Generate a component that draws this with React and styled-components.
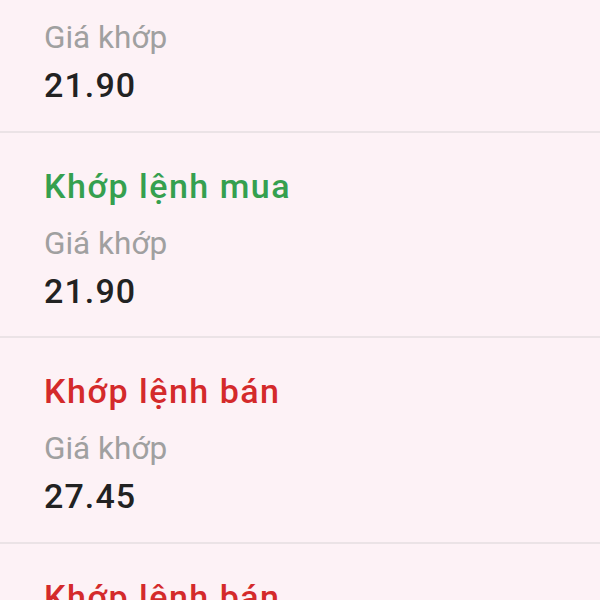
import React from "react";
import styled, { createGlobalStyle } from "styled-components";

const GlobalStyle = createGlobalStyle`
  html, body {
    margin: 0;
    padding: 0;
    background: #fdf2f6;
  }
  body {
    font-family: Roboto, "Noto Sans", "Liberation Sans", sans-serif;
    -webkit-font-smoothing: antialiased;
  }
`;

const Screen = styled.div`
  width: 600px;
  height: 600px;
  overflow: hidden;
  background: #fdf2f6;
`;

// the list is scrolled, the first order's title is above the viewport
const List = styled.ul`
  list-style: none;
  margin: -73px 0 0;
  padding: 0;
`;

const Item = styled.li`
  padding: 29px 44px 21.5px;
  border-bottom: 2px solid #ebe3e6;
`;

const Title = styled.div`
  font-size: 34px;
  line-height: 48px;
  font-weight: 500;
  letter-spacing: 1.5px;
  color: ${(props) => (props.side === "buy" ? "#35a04f" : "#d42a2b")};
`;

const Label = styled.div`
  margin-top: 10px;
  font-size: 31.5px;
  line-height: 48px;
  color: #a0a0a0;
`;

const Value = styled.div`
  margin-top: -1px;
  font-size: 34px;
  line-height: 48px;
  font-weight: 500;
  letter-spacing: 1.1px;
  color: #222222;
`;

const orders = [
  { side: "buy", price: "21.90" },
  { side: "buy", price: "21.90" },
  { side: "sell", price: "27.45" },
  { side: "sell", price: "27.45" },
];

const App = () => {
  return (
    <>
      <GlobalStyle />
      <Screen>
        <List>
          {orders.map((o, i) => (
            <Item key={i}>
              <Title side={o.side}>
                {o.side === "buy" ? "Khớp lệnh mua" : "Khớp lệnh bán"}
              </Title>
              <Label>Giá khớp</Label>
              <Value>{o.price}</Value>
            </Item>
          ))}
        </List>
      </Screen>
    </>
  );
};

export default App;
